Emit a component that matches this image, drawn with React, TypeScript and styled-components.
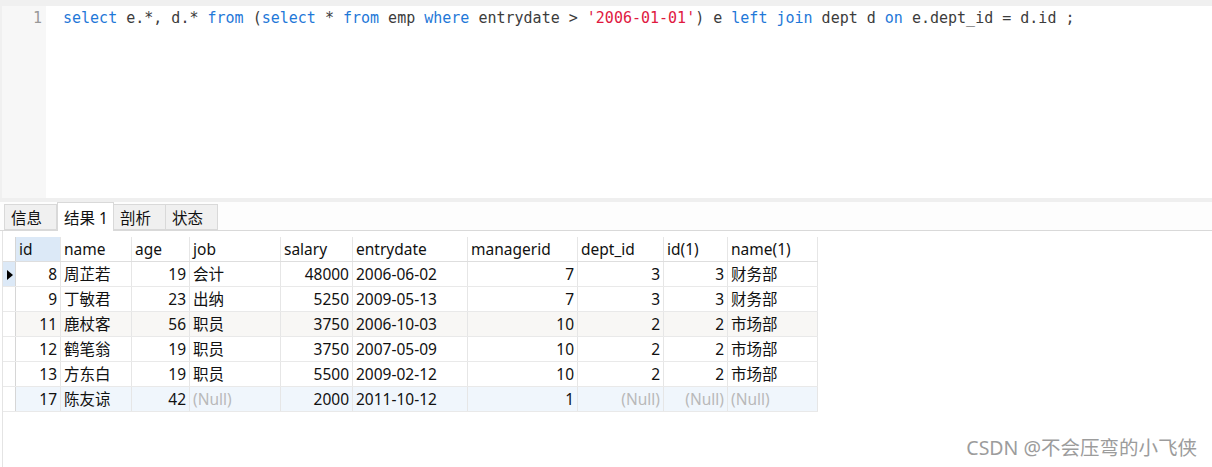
import { createGlobalStyle } from 'styled-components';
import styled from 'styled-components';

const GlobalStyle = createGlobalStyle`
    html, body {
        margin: 0;
        padding: 0;
        background: #ffffff;
    }
`;

const Page = styled.div`
    position: relative;
    width: 1212px;
    height: 467px;
    overflow: hidden;
    display: flex;
    flex-direction: column;
    background: #ffffff;
    font-family: 'Noto Sans', 'Noto Sans CJK SC', sans-serif;
`;

const TopStrip = styled.div`
    height: 6px;
    background: #f0f0f0;
`;

const Editor = styled.div`
    display: flex;
    height: 192px;
`;

const Gutter = styled.div`
    width: 46px;
    background: #f7f7f7;
    border-left: 2px solid #f0f0f0;
    box-sizing: border-box;
    padding-right: 4px;
    text-align: right;
    font-family: 'DejaVu Sans Mono', monospace;
    font-size: 15px;
    line-height: 24px;
    color: #999999;
`;

const Code = styled.div`
    flex: 1;
    padding-left: 17px;
    font-family: 'DejaVu Sans Mono', monospace;
    font-size: 15px;
    line-height: 24px;
    color: #3c3c3c;
    white-space: pre;
`;

const Kw = styled.span`
    color: #1f78d8;
`;

const Str = styled.span`
    color: #e0193f;
`;

const Divider = styled.div`
    height: 4px;
    background: #efefef;
`;

const TabBar = styled.div`
    height: 28px;
    display: flex;
    align-items: flex-end;
    padding-left: 4px;
    background: #fdfdfd;
    border-bottom: 1px solid #d9d9d9;
`;

const Tab = styled.div<{ active?: boolean; first?: boolean; width: number }>`
    box-sizing: border-box;
    width: ${p => p.width}px;
    height: ${p => (p.active ? 29 : 26)}px;
    margin-bottom: ${p => (p.active ? -1 : 0)}px;
    padding-left: 6px;
    display: flex;
    align-items: center;
    font-size: 15.5px;
    color: #111111;
    background: ${p => (p.active ? '#ffffff' : '#f0f0f0')};
    border: 1px solid #d9d9d9;
    border-bottom: ${p => (p.active ? 'none' : '1px solid #d9d9d9')};
    border-left: ${p => (p.first || p.active ? '1px solid #d9d9d9' : 'none')};
`;

const GridArea = styled.div`
    flex: 1;
    margin-left: 2px;
    border-left: 1px solid #e4e4e4;
    padding-top: 6px;
`;

const Table = styled.table`
    border-collapse: collapse;
    table-layout: fixed;
    font-size: 15.5px;
    color: #111111;
`;

const Th = styled.th<{ w: number; hl?: boolean; edge?: boolean }>`
    width: ${p => p.w}px;
    height: 24px;
    padding: 0 ${p => (p.edge ? 0 : 3)}px;
    box-sizing: border-box;
    text-align: left;
    font-weight: normal;
    white-space: nowrap;
    overflow: hidden;
    background: ${p => (p.hl ? '#dce9f7' : '#ffffff')};
    border-right: 1px solid ${p => (p.edge ? '#d6d6d6' : '#e6e6e6')};
    border-bottom: 1px solid #dedede;
`;

const Row = styled.tr<{ bg: string }>`
    background: ${p => p.bg};
`;

const Td = styled.td<{ num?: boolean; nul?: boolean }>`
    height: 24px;
    padding: 0 3px;
    box-sizing: border-box;
    white-space: nowrap;
    overflow: hidden;
    text-align: ${p => (p.num ? 'right' : 'left')};
    color: ${p => (p.nul ? '#b9b9b9' : '#111111')};
    border-right: 1px solid #e6e6e6;
    border-bottom: 1px solid #e9e9e9;
`;

const Marker = styled.td<{ current?: boolean }>`
    width: 12px;
    height: 24px;
    padding: 0;
    background: ${p => (p.current ? '#dce9f7' : '#ffffff')};
    border-right: 1px solid #d6d6d6;
    border-bottom: 1px solid #e9e9e9;
    text-align: center;
`;

const Triangle = styled.span`
    display: inline-block;
    width: 0;
    height: 0;
    margin-left: 1px;
    border-top: 5px solid transparent;
    border-bottom: 5px solid transparent;
    border-left: 6px solid #000000;
    vertical-align: middle;
`;

const Watermark = styled.div`
    position: absolute;
    right: 15px;
    bottom: 6px;
    font-family: 'Noto Sans', 'Noto Sans CJK SC', sans-serif;
    font-size: 19.5px;
    color: #9c9c9c;
`;

const columns: { name: string; w: number; num?: boolean }[] = [
    { name: 'id', w: 45, num: true },
    { name: 'name', w: 71 },
    { name: 'age', w: 58, num: true },
    { name: 'job', w: 91 },
    { name: 'salary', w: 72, num: true },
    { name: 'entrydate', w: 115 },
    { name: 'managerid', w: 110, num: true },
    { name: 'dept_id', w: 86, num: true },
    { name: 'id(1)', w: 64, num: true },
    { name: 'name(1)', w: 90 },
];

const N = null;
const rows: (string | null)[][] = [
    ['8', '周芷若', '19', '会计', '48000', '2006-06-02', '7', '3', '3', '财务部'],
    ['9', '丁敏君', '23', '出纳', '5250', '2009-05-13', '7', '3', '3', '财务部'],
    ['11', '鹿杖客', '56', '职员', '3750', '2006-10-03', '10', '2', '2', '市场部'],
    ['12', '鹤笔翁', '19', '职员', '3750', '2007-05-09', '10', '2', '2', '市场部'],
    ['13', '方东白', '19', '职员', '5500', '2009-02-12', '10', '2', '2', '市场部'],
    ['17', '陈友谅', '42', N, '2000', '2011-10-12', '1', N, N, N],
];

const rowBg = ['#ffffff', '#ffffff', '#f8f7f5', '#ffffff', '#ffffff', '#f0f6fc'];

export default function App() {
    return (
        <Page>
            <GlobalStyle />
            <TopStrip />
            <Editor>
                <Gutter>1</Gutter>
                <Code>
                    <Kw>select</Kw> e.*, d.* <Kw>from</Kw> (<Kw>select</Kw> * <Kw>from</Kw> emp <Kw>where</Kw> entrydate &gt;{' '}
                    <Str>'2006-01-01'</Str>) e <Kw>left</Kw> <Kw>join</Kw> dept d <Kw>on</Kw> e.dept_id = d.id ;
                </Code>
            </Editor>
            <Divider />
            <TabBar>
                <Tab width={53} first>信息</Tab>
                <Tab width={57} active>结果 1</Tab>
                <Tab width={52}>剖析</Tab>
                <Tab width={52}>状态</Tab>
            </TabBar>
            <GridArea>
                <Table>
                    <thead>
                        <tr>
                            <Th w={12} edge />
                            {columns.map((c, i) => (
                                <Th key={c.name} w={c.w} hl={i === 0}>
                                    {c.name}
                                </Th>
                            ))}
                        </tr>
                    </thead>
                    <tbody>
                        {rows.map((r, ri) => (
                            <Row key={ri} bg={rowBg[ri]}>
                                <Marker current={ri === 0}>{ri === 0 && <Triangle />}</Marker>
                                {r.map((v, ci) => (
                                    <Td key={ci} num={columns[ci].num} nul={v === null}>
                                        {v === null ? '(Null)' : v}
                                    </Td>
                                ))}
                            </Row>
                        ))}
                    </tbody>
                </Table>
            </GridArea>
            <Watermark>CSDN @不会压弯的小飞侠</Watermark>
        </Page>
    );
}
